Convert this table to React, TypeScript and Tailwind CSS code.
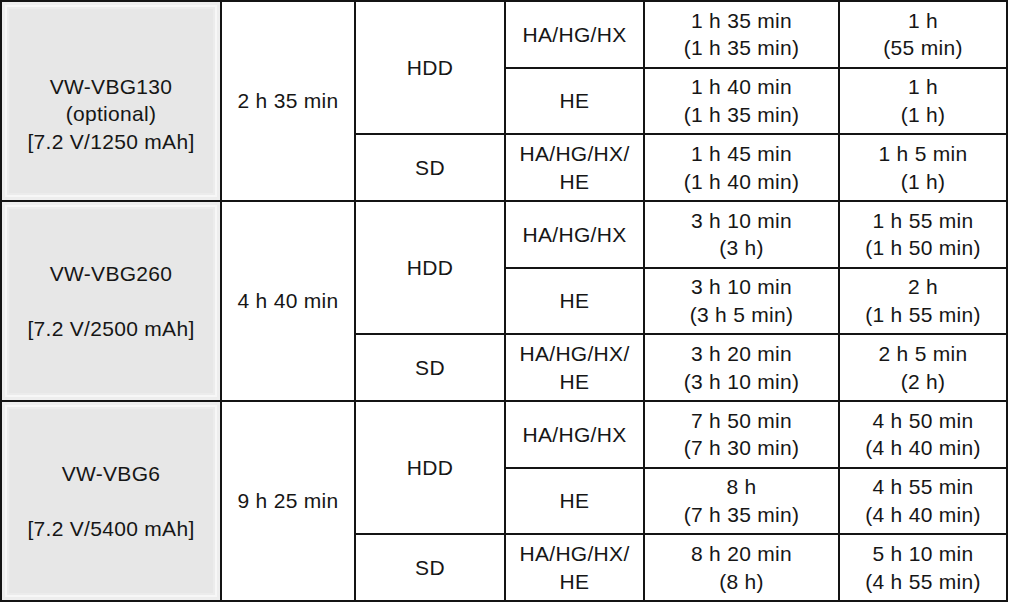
import React from 'react';

type SubRow = { mode: string[]; rec: [string, string]; act: [string, string] };
type Group = { model: string[]; time: string; hdd: SubRow[]; sd: SubRow; modelPad: string };

const groups: Group[] = [
  {
    model: ['VW-VBG130', '(optional)', '[7.2 V/1250 mAh]'],
    modelPad: 'pt-[26px]',
    time: '2 h 35 min',
    hdd: [
      { mode: ['HA/HG/HX'], rec: ['1 h 35 min', '(1 h 35 min)'], act: ['1 h', '(55 min)'] },
      { mode: ['HE'], rec: ['1 h 40 min', '(1 h 35 min)'], act: ['1 h', '(1 h)'] },
    ],
    sd: { mode: ['HA/HG/HX/', 'HE'], rec: ['1 h 45 min', '(1 h 40 min)'], act: ['1 h 5 min', '(1 h)'] },
  },
  {
    model: ['VW-VBG260', '\u00a0', '[7.2 V/2500 mAh]'],
    modelPad: '',
    time: '4 h 40 min',
    hdd: [
      { mode: ['HA/HG/HX'], rec: ['3 h 10 min', '(3 h)'], act: ['1 h 55 min', '(1 h 50 min)'] },
      { mode: ['HE'], rec: ['3 h 10 min', '(3 h 5 min)'], act: ['2 h', '(1 h 55 min)'] },
    ],
    sd: { mode: ['HA/HG/HX/', 'HE'], rec: ['3 h 20 min', '(3 h 10 min)'], act: ['2 h 5 min', '(2 h)'] },
  },
  {
    model: ['VW-VBG6', '\u00a0', '[7.2 V/5400 mAh]'],
    modelPad: '',
    time: '9 h 25 min',
    hdd: [
      { mode: ['HA/HG/HX'], rec: ['7 h 50 min', '(7 h 30 min)'], act: ['4 h 50 min', '(4 h 40 min)'] },
      { mode: ['HE'], rec: ['8 h', '(7 h 35 min)'], act: ['4 h 55 min', '(4 h 40 min)'] },
    ],
    sd: { mode: ['HA/HG/HX/', 'HE'], rec: ['8 h 20 min', '(8 h)'], act: ['5 h 10 min', '(4 h 55 min)'] },
  },
];

function Cell({ lines, className = '' }: { lines: string[]; className?: string }) {
  return (
    <div className={`flex flex-col items-center justify-center bg-white text-center ${className}`}>
      {lines.map((l, i) => (
        <span key={i} className="block whitespace-pre">
          {l}
        </span>
      ))}
    </div>
  );
}

function SubCells({ row }: { row: SubRow }) {
  return (
    <>
      <Cell lines={row.mode} />
      <Cell lines={row.rec} />
      <Cell lines={row.act} />
    </>
  );
}

export default function App() {
  return (
    <div className="h-[603px] w-[1011px] bg-white">
      <div
        className="grid h-[602px] w-[1008px] grid-cols-[218px_132px_148px_137px_193px_166px] grid-rows-[repeat(9,1fr)] gap-[2px] bg-[#141414] p-[2px] text-[21px] leading-[27.5px] tracking-[0.3px] text-[#161616]"
        style={{ fontFamily: '"Liberation Sans", Arial, sans-serif' }}
      >
        {groups.map((g) => (
          <React.Fragment key={g.model[0]}>
            <Cell
              lines={g.model}
              className={`row-span-3 !bg-[#e7e7e7] shadow-[inset_0_0_0_3px_#eeeeee,inset_0_0_0_5px_#f7f7f7,inset_0_0_0_7px_#ececec] ${g.modelPad}`}
            />
            <Cell lines={[g.time]} className="row-span-3" />
            <Cell lines={['HDD']} className="row-span-2" />
            <SubCells row={g.hdd[0]} />
            <SubCells row={g.hdd[1]} />
            <Cell lines={['SD']} />
            <SubCells row={g.sd} />
          </React.Fragment>
        ))}
      </div>
    </div>
  );
}
